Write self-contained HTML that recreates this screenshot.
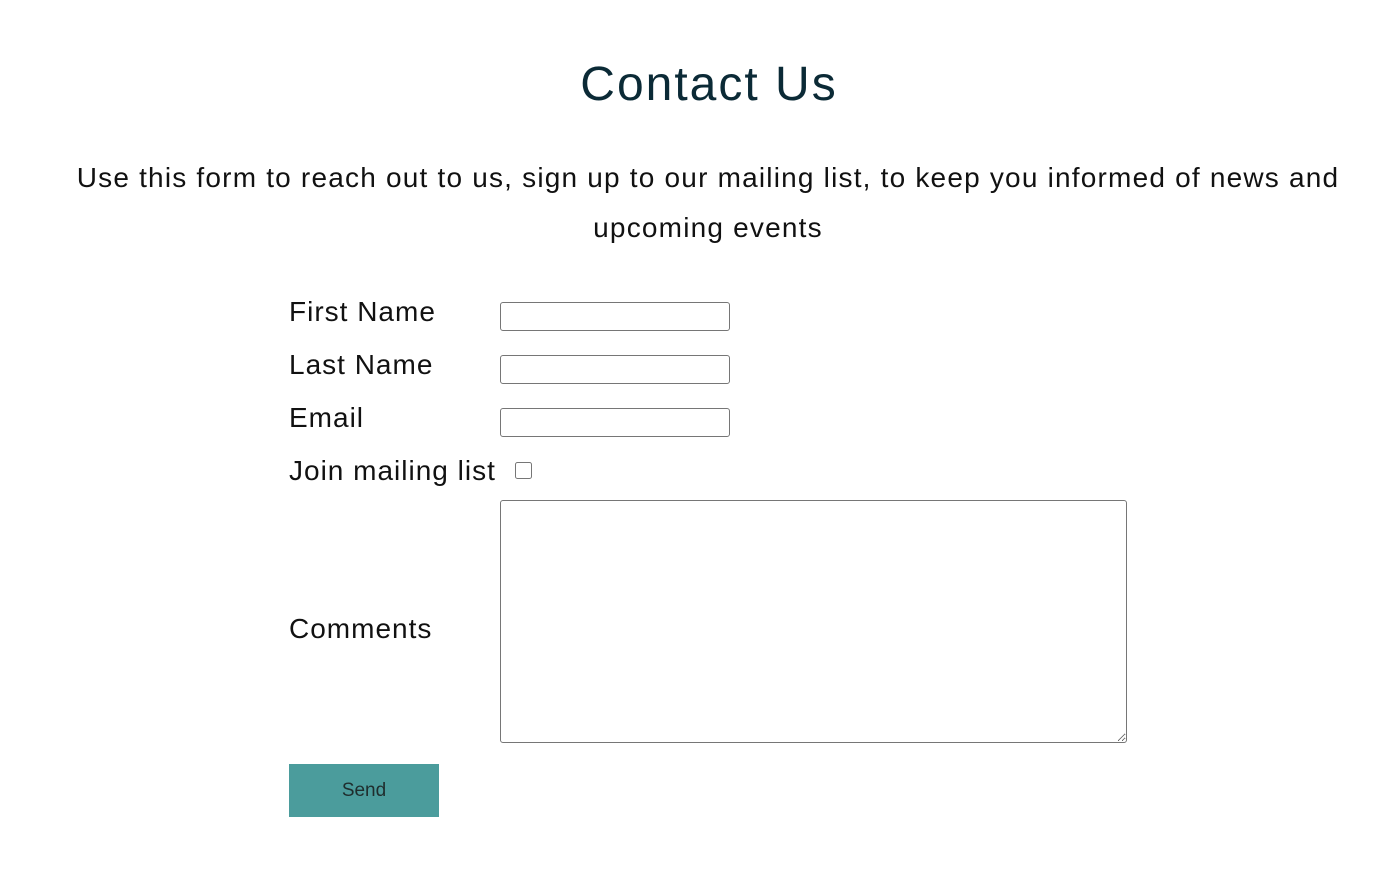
<!DOCTYPE html>
<html><head><meta charset="utf-8"><style>
html,body{margin:0;padding:0;background:#fff;width:1397px;height:887px;overflow:hidden;font-family:"Liberation Sans",sans-serif;}
h1{position:absolute;top:57px;left:0;width:1418px;text-align:center;margin:0;font-weight:400;font-size:48px;color:#0b2a36;letter-spacing:2px;}
p.intro{position:absolute;top:153px;left:58px;width:1300px;text-align:center;margin:0;font-size:28px;line-height:50px;color:#111;letter-spacing:1.2px;}
.lbl{position:absolute;left:289px;font-size:28px;color:#111;letter-spacing:1px;}
input[type=text]{position:absolute;left:500px;width:230px;height:29px;box-sizing:border-box;border:1px solid #767676;border-radius:3px;margin:0;}
input[type=checkbox]{position:absolute;left:515px;top:462px;width:17px;height:17px;margin:0;}
textarea{position:absolute;left:500px;top:500px;width:627px;height:243px;box-sizing:border-box;border:1px solid #767676;border-radius:3px;margin:0;}
button{position:absolute;left:289px;top:764px;width:150px;height:53px;background:#4b9c9c;border:0;font-size:19px;color:#1f2d2d;font-family:"Liberation Sans",sans-serif;}
</style></head><body>
<h1>Contact Us</h1>
<p class="intro">Use this form to reach out to us, sign up to our mailing list, to keep you informed of news and upcoming events</p>
<div class="lbl" style="top:296px">First Name</div>
<input type="text" style="top:302px">
<div class="lbl" style="top:349px">Last Name</div>
<input type="text" style="top:355px">
<div class="lbl" style="top:402px">Email</div>
<input type="text" style="top:408px">
<div class="lbl" style="top:455px">Join mailing list</div>
<input type="checkbox">
<div class="lbl" style="top:613px">Comments</div>
<textarea></textarea>
<button>Send</button>
</body></html>
